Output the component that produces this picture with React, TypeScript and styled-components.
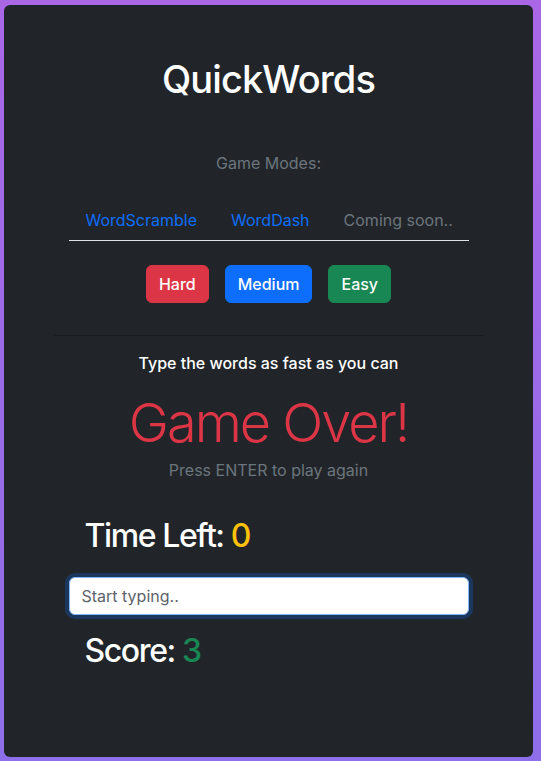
import React from "react";
import styled, { createGlobalStyle } from "styled-components";

const GlobalStyle = createGlobalStyle`
  html, body {
    margin: 0;
    padding: 0;
  }
  body {
    background: linear-gradient(to bottom, #a967e6, #8e6ee9);
    font-family: Inter, "Noto Sans", "Liberation Sans", sans-serif;
    min-height: 761px;
  }
  * { box-sizing: border-box; }
`;

const Page = styled.div`
  padding: 5px 8px 4px 4px;
  height: 761px;
`;

const Card = styled.main`
  background: #212529;
  border-radius: 6px;
  height: 100%;
  display: flex;
  flex-direction: column;
  align-items: center;
  color: #fff;
`;

const Title = styled.h1`
  margin: 50px 0 0;
  font-size: 38px;
  font-weight: 500;
  line-height: 48px;
  letter-spacing: -0.9px;
`;

const ModesLabel = styled.p`
  margin: 48px 0 0;
  font-size: 16px;
  line-height: 24px;
  color: #6c757d;
`;

const Tabs = styled.nav`
  margin-top: 24px;
  width: 400px;
  display: flex;
  border-bottom: 1px solid #dee2e6;
`;

const Tab = styled.a<{ $disabled?: boolean }>`
  padding: 8px 16px;
  border: 1px solid transparent;
  margin-bottom: -1px;
  font-size: 16px;
  line-height: 24px;
  white-space: nowrap;
  text-decoration: none;
  color: ${(p) => (p.$disabled ? "#6c757d" : "#0d6efd")};
  cursor: ${(p) => (p.$disabled ? "default" : "pointer")};
`;

const ButtonRow = styled.div`
  margin-top: 24px;
  display: flex;
  gap: 16px;
`;

const LevelButton = styled.button<{ $bg: string }>`
  background: ${(p) => p.$bg};
  border: 1px solid ${(p) => p.$bg};
  color: #fff;
  border-radius: 6px;
  padding: 6px 12px;
  font-family: inherit;
  font-size: 16px;
  line-height: 24px;
  font-weight: 500;
`;

const Divider = styled.hr`
  margin: 32px 0 0;
  width: 430px;
  border: 0;
  border-top: 1px solid #1a1d20;
`;

const Prompt = styled.p`
  margin: 15px 0 0;
  font-size: 16px;
  line-height: 24px;
  font-weight: 500;
`;

const GameOver = styled.h2`
  margin: 16px 0 0;
  font-size: 54px;
  font-weight: 300;
  line-height: 64px;
  color: #dc3545;
  letter-spacing: -2px;
`;

const Hint = styled.p`
  margin: 3px 0 0;
  font-size: 16px;
  line-height: 24px;
  color: #6c757d;
`;

const Stats = styled.section`
  width: 400px;
  display: flex;
  flex-direction: column;
  margin-top: 35px;
`;

const Stat = styled.h3`
  margin: 0;
  padding-left: 16px;
  font-size: 32px;
  font-weight: 500;
  line-height: 38px;
  letter-spacing: -1.4px;
`;

const Value = styled.span<{ $color: string }>`
  color: ${(p) => p.$color};
`;

const Input = styled.input`
  margin: 22px 0 17px;
  width: 400px;
  height: 38px;
  padding: 6px 12px;
  font-family: inherit;
  font-size: 16px;
  line-height: 24px;
  border: 1px solid #86b7fe;
  border-radius: 6px;
  box-shadow: 0 0 0 4px rgba(13, 110, 253, 0.25);
  outline: none;
  color: #212529;
  background: #fff;
  &::placeholder {
    color: #5c636a;
  }
`;

export default function App() {
  return (
    <>
      <GlobalStyle />
      <Page>
        <Card>
          <Title>QuickWords</Title>
          <ModesLabel>Game Modes:</ModesLabel>
          <Tabs>
            <Tab>WordScramble</Tab>
            <Tab>WordDash</Tab>
            <Tab $disabled>Coming soon..</Tab>
          </Tabs>
          <ButtonRow>
            <LevelButton $bg="#dc3545">Hard</LevelButton>
            <LevelButton $bg="#0d6efd">Medium</LevelButton>
            <LevelButton $bg="#198754">Easy</LevelButton>
          </ButtonRow>
          <Divider />
          <Prompt>Type the words as fast as you can</Prompt>
          <GameOver>Game Over!</GameOver>
          <Hint>Press ENTER to play again</Hint>
          <Stats>
            <Stat>
              Time Left: <Value $color="#ffc107">0</Value>
            </Stat>
            <Input placeholder="Start typing.." />
            <Stat>
              Score: <Value $color="#198754">3</Value>
            </Stat>
          </Stats>
        </Card>
      </Page>
    </>
  );
}
